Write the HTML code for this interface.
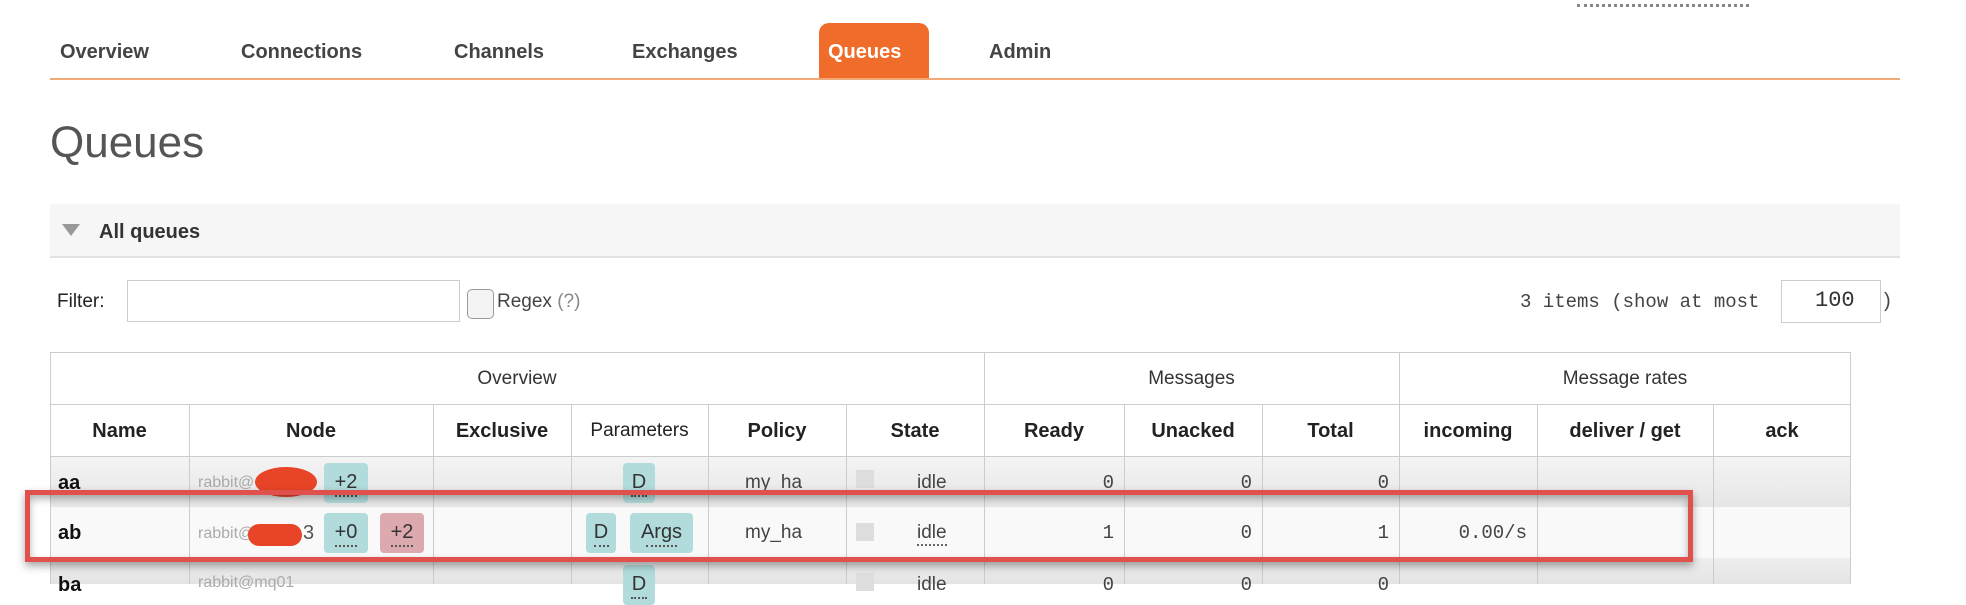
<!DOCTYPE html>
<html><head><meta charset="utf-8"><style>
*{margin:0;padding:0;box-sizing:border-box}
body{width:1966px;height:584px;overflow:hidden;background:#fff;font-family:"Liberation Sans",Arial,sans-serif;color:#333;position:relative}
.a{position:absolute;white-space:nowrap}
.nav{font-weight:bold;font-size:20px;color:#444;top:41px}
.th{font-weight:bold;font-size:20px;color:#222;text-align:center}
.mono{font-family:"Liberation Mono",monospace}
.b{position:absolute;border-radius:4px;font-size:20px;color:#333;text-align:center;padding-top:8px}
.b:after{content:"";position:absolute;left:25%;right:25%;bottom:6px;border-bottom:2px dotted #555}
.cy{background:#b2dcdc}
.pk{background:#dcaaae}
.vl{position:absolute;width:1px;background:#ccc}
.hl{position:absolute;height:1px;background:#ccc}
</style></head><body>
<div class="a" style="left:1577px;top:4px;width:172px;border-bottom:3px dotted #888"></div>
<div class="a nav" style="left:60px">Overview</div>
<div class="a nav" style="left:241px">Connections</div>
<div class="a nav" style="left:454px">Channels</div>
<div class="a nav" style="left:632px">Exchanges</div>
<div class="a" style="left:819px;top:23px;width:110px;height:57px;background:#ef6c2a;border-radius:10px 10px 0 0"></div>
<div class="a nav" style="left:828px;color:#fff">Queues</div>
<div class="a nav" style="left:989px">Admin</div>
<div class="a" style="left:50px;top:78px;width:1850px;height:2px;background:#f1a977"></div>
<div class="a" style="left:50px;top:118px;font-size:44px;color:#555">Queues</div>
<div class="a" style="left:50px;top:204px;width:1850px;height:54px;background:#f6f6f6;border-bottom:2px solid #e2e2e2"></div>
<div class="a" style="left:62px;top:224px;width:0;height:0;border-left:9px solid transparent;border-right:9px solid transparent;border-top:12px solid #999"></div>
<div class="a" style="left:99px;top:221px;font-size:20px;font-weight:bold;color:#333">All queues</div>
<div class="a" style="left:57px;top:291px;font-size:19px;color:#222">Filter:</div>
<div class="a" style="left:127px;top:280px;width:333px;height:42px;border:1px solid #ccc"></div>
<div class="a" style="left:467px;top:289px;width:27px;height:30px;border:1px solid #999;border-radius:5px;background:#f4f4f4"></div>
<div class="a" style="left:497px;top:291px;font-size:19px;color:#444">Regex <span style="color:#888">(?)</span></div>
<div class="a mono" style="left:1520px;top:291px;font-size:19px;color:#444">3 items (show at most</div>
<div class="a" style="left:1781px;top:280px;width:100px;height:43px;border:1px solid #ccc"></div>
<div class="a mono" style="left:1815px;top:288px;font-size:22px;color:#333">100</div>
<div class="a" style="left:1884px;top:290px;font-size:20px;color:#444">)</div>
<div class="a" style="left:50px;top:352px;width:1801px;height:232px;border:1px solid #ccc;border-bottom:none"></div>
<div class="a" style="left:51px;top:456px;width:1799px;height:51px;background:linear-gradient(#f4f4f4,#e6e6e6)"></div>
<div class="a" style="left:51px;top:507px;width:1799px;height:51px;background:#f9f9f9"></div>
<div class="a" style="left:51px;top:558px;width:1799px;height:26px;background:linear-gradient(#eee,#e4e4e4)"></div>
<div class="hl" style="left:50px;top:404px;width:1801px"></div>
<div class="hl" style="left:50px;top:456px;width:1801px"></div>
<div class="vl" style="left:984px;top:352px;height:232px"></div>
<div class="vl" style="left:1399px;top:352px;height:232px"></div>
<div class="vl" style="left:189px;top:404px;height:180px"></div>
<div class="vl" style="left:433px;top:404px;height:180px"></div>
<div class="vl" style="left:571px;top:404px;height:180px"></div>
<div class="vl" style="left:708px;top:404px;height:180px"></div>
<div class="vl" style="left:846px;top:404px;height:180px"></div>
<div class="vl" style="left:1124px;top:404px;height:180px"></div>
<div class="vl" style="left:1262px;top:404px;height:180px"></div>
<div class="vl" style="left:1537px;top:404px;height:180px"></div>
<div class="vl" style="left:1713px;top:404px;height:180px"></div>
<div class="a" style="left:50px;width:934px;top:368px;text-align:center;font-size:19px;color:#333">Overview</div>
<div class="a" style="left:984px;width:415px;top:368px;text-align:center;font-size:19px;color:#333">Messages</div>
<div class="a" style="left:1399px;width:452px;top:368px;text-align:center;font-size:19px;color:#333">Message rates</div>
<div class="a th" style="left:50px;width:139px;top:420px">Name</div>
<div class="a th" style="left:189px;width:244px;top:420px">Node</div>
<div class="a th" style="left:433px;width:138px;top:420px">Exclusive</div>
<div class="a" style="left:571px;width:137px;top:420px;text-align:center;font-size:19px;color:#222">Parameters</div>
<div class="a th" style="left:708px;width:138px;top:420px">Policy</div>
<div class="a th" style="left:846px;width:138px;top:420px">State</div>
<div class="a th" style="left:984px;width:140px;top:420px">Ready</div>
<div class="a th" style="left:1124px;width:138px;top:420px">Unacked</div>
<div class="a th" style="left:1262px;width:137px;top:420px">Total</div>
<div class="a th" style="left:1399px;width:138px;top:420px">incoming</div>
<div class="a th" style="left:1537px;width:176px;top:420px">deliver / get</div>
<div class="a th" style="left:1713px;width:138px;top:420px">ack</div>
<div class="a" style="left:58px;top:472px;font-size:20px;font-weight:bold;color:#111">aa</div>
<div class="a" style="left:198px;top:474px;font-size:16px;color:#aaa">rabbit@</div>
<div class="b cy" style="left:324px;top:463px;width:44px;height:40px">+2</div>
<div class="b cy" style="left:623px;top:463px;width:32px;height:40px">D</div>
<div class="a" style="left:745px;top:472px;font-size:19px;color:#444">my_ha</div>
<div class="a" style="left:856px;top:470px;width:18px;height:18px;background:#ddd"></div>
<div class="a" style="left:917px;top:472px;font-size:19px;color:#444">idle</div>
<div class="a mono" style="left:984px;width:130px;top:472px;text-align:right;font-size:19px;color:#444">0</div>
<div class="a mono" style="left:1124px;width:128px;top:472px;text-align:right;font-size:19px;color:#444">0</div>
<div class="a mono" style="left:1262px;width:127px;top:472px;text-align:right;font-size:19px;color:#444">0</div>
<div class="a" style="left:255px;top:467px;width:62px;height:30px;border-radius:50%;background:#e84427"></div>
<div class="a" style="left:58px;top:522px;font-size:20px;font-weight:bold;color:#111">ab</div>
<div class="a" style="left:198px;top:525px;font-size:16px;color:#aaa">rabbit@</div>
<div class="a" style="left:303px;top:522px;font-size:20px;color:#555">3</div>
<div class="b cy" style="left:324px;top:513px;width:44px;height:40px">+0</div>
<div class="b pk" style="left:380px;top:513px;width:44px;height:40px">+2</div>
<div class="b cy" style="left:586px;top:513px;width:30px;height:40px">D</div>
<div class="b cy" style="left:630px;top:513px;width:63px;height:40px">Args</div>
<div class="a" style="left:745px;top:522px;font-size:19px;color:#444">my_ha</div>
<div class="a" style="left:856px;top:523px;width:18px;height:18px;background:#ddd"></div>
<div class="a" style="left:917px;top:522px;font-size:19px;color:#444;border-bottom:2px dotted #666">idle</div>
<div class="a mono" style="left:984px;width:130px;top:522px;text-align:right;font-size:19px;color:#444">1</div>
<div class="a mono" style="left:1124px;width:128px;top:522px;text-align:right;font-size:19px;color:#444">0</div>
<div class="a mono" style="left:1262px;width:127px;top:522px;text-align:right;font-size:19px;color:#444">1</div>
<div class="a mono" style="left:1399px;width:128px;top:522px;text-align:right;font-size:19px;color:#444">0.00/s</div>
<div class="a" style="left:248px;top:524px;width:54px;height:22px;border-radius:11px;background:#e84427"></div>
<div class="a" style="left:58px;top:574px;font-size:20px;font-weight:bold;color:#111">ba</div>
<div class="a" style="left:198px;top:574px;font-size:16px;color:#aaa">rabbit@mq01</div>
<div class="b cy" style="left:623px;top:565px;width:32px;height:40px">D</div>
<div class="a" style="left:856px;top:573px;width:18px;height:18px;background:#ddd"></div>
<div class="a" style="left:917px;top:574px;font-size:19px;color:#444">idle</div>
<div class="a mono" style="left:984px;width:130px;top:574px;text-align:right;font-size:19px;color:#444">0</div>
<div class="a mono" style="left:1124px;width:128px;top:574px;text-align:right;font-size:19px;color:#444">0</div>
<div class="a mono" style="left:1262px;width:127px;top:574px;text-align:right;font-size:19px;color:#444">0</div>
<div class="a" style="left:25px;top:490px;width:1668px;height:72px;border:5px solid #e0504c;box-shadow:0 4px 8px rgba(0,0,0,.35),inset 0 4px 8px rgba(0,0,0,.3)"></div>
</body></html>
